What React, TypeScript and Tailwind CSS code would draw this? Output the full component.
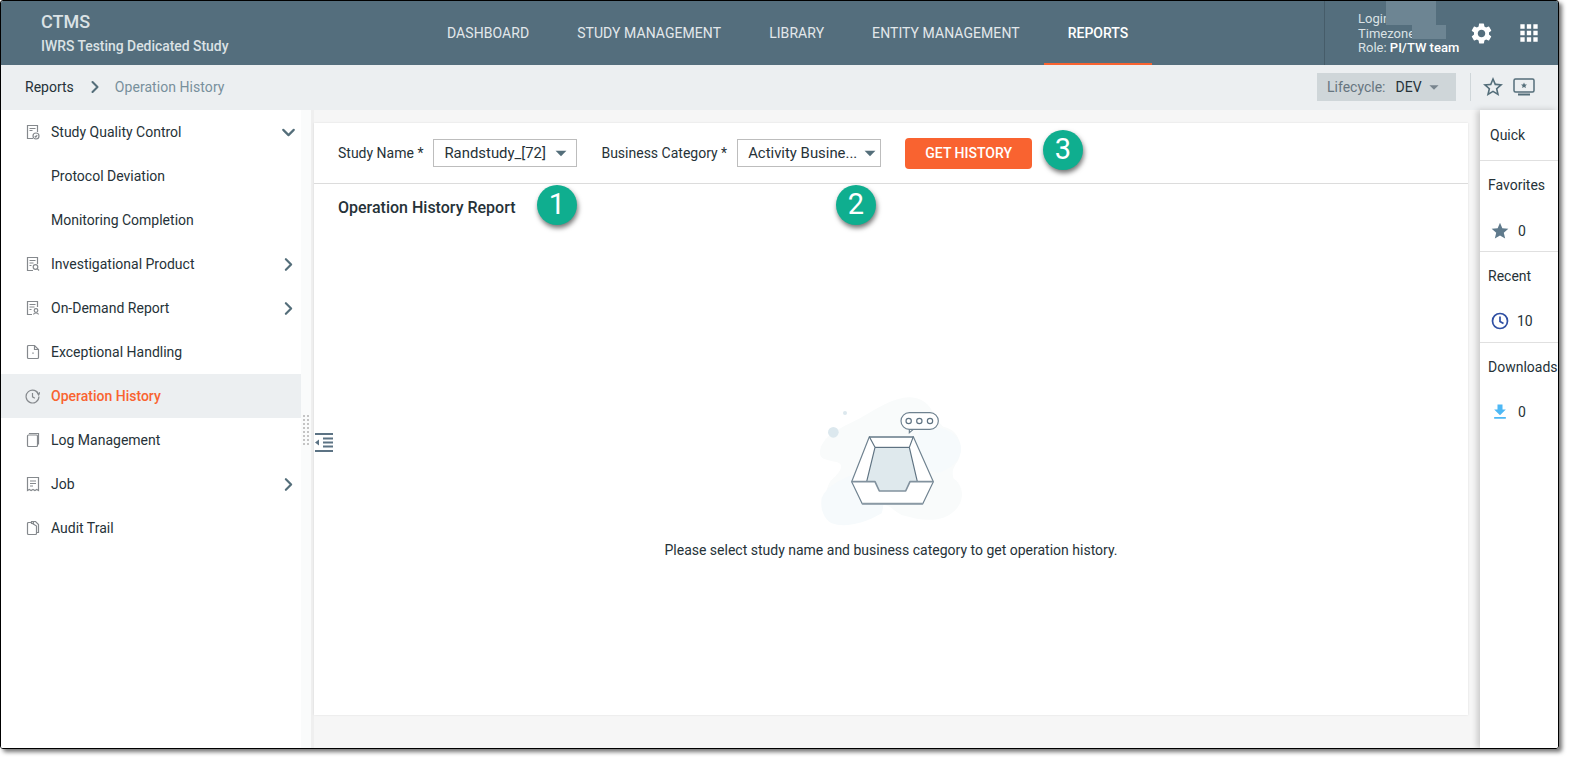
import { ChevronDown, ChevronRight } from "lucide-react";
import { MdApps, MdArrowDropDown, MdFileDownload, MdSettings, MdStar, MdStarBorder } from "react-icons/md";

const navItems = ["DASHBOARD", "STUDY MANAGEMENT", "LIBRARY", "ENTITY MANAGEMENT", "REPORTS"];

const Sheet = ({ children }: { children: React.ReactNode }) => (
  <svg width="14" height="16" viewBox="0 0 14 16" fill="none" stroke="#85898d" strokeWidth="1.2">
    {children}
  </svg>
);

const icons: Record<string, React.ReactNode> = {
  quality: (
    <Sheet>
      <path d="M7 14.500H1.500V1.500h10V8" />
      <path d="M3.500 4.500h6M3.500 6.500h3" />
      <circle cx="10" cy="12" r="3" />
      <path d="M8.800 12l1 1 1.400-1.800" />
    </Sheet>
  ),
  product: (
    <Sheet>
      <path d="M7 14.500H1.500V1.500h10V8" />
      <path d="M3.500 4.500h6M3.500 7h4M3.500 9.500h2" />
      <circle cx="9.500" cy="11" r="2.300" />
      <path d="M11.200 12.700l1.800 1.800" />
    </Sheet>
  ),
  demand: (
    <Sheet>
      <path d="M6 14.500H1.500V1.500h10V7" />
      <path d="M3.500 4.500h6M3.500 7h5M3.500 9.500h2" />
      <circle cx="10" cy="10.500" r="1.800" />
      <path d="M7.500 14.500c.3-2 4.700-2 5 0" />
    </Sheet>
  ),
  exceptional: (
    <Sheet>
      <path d="M8.500 1.500H2.500a1 1 0 0 0-1 1v11a1 1 0 0 0 1 1h9a1 1 0 0 0 1-1v-8z" />
      <path d="M8.500 1.500v4h4" />
      <path d="M7 8.500v1.200" strokeWidth="1.400" />
    </Sheet>
  ),
  history: (
    <svg width="15" height="15" viewBox="0 0 14 14" fill="none" stroke="#85898d" strokeWidth="1.100">
      <path d="M12.800 5.500A6 6 0 1 0 13 7" />
      <path d="M11 2.800l1.800 2.700 1-2.500" />
      <path d="M7 3.800V7.300l2.200 1.400" />
    </svg>
  ),
  log: (
    <Sheet>
      <path d="M3.500 2V1.500h9v10.500h-1" />
      <rect x="1.500" y="3" width="10" height="11.500" rx="1" />
    </Sheet>
  ),
  job: (
    <Sheet>
      <path d="M1.500 1.500h11v13l-1.800-1-1.800 1-1.900-1-1.900 1-1.800-1-1.800 1z" />
      <path d="M4 5h6M4 7.500h6M4 10h3" />
    </Sheet>
  ),
  audit: (
    <Sheet>
      <path d="M5 2.500H2.500a1 1 0 0 0-1 1v10a1 1 0 0 0 1 1h7a1 1 0 0 0 1-1V6z" />
      <path d="M5.500 4V1.500h4l3 3v8h-2" />
      <path d="M7.500 1.500v3" />
    </Sheet>
  ),
};

const menu = [
  { label: "Study Quality Control", icon: "quality", arrow: "down" },
  { label: "Protocol Deviation" },
  { label: "Monitoring Completion" },
  { label: "Investigational Product", icon: "product", arrow: "right" },
  { label: "On-Demand Report", icon: "demand", arrow: "right" },
  { label: "Exceptional Handling", icon: "exceptional" },
  { label: "Operation History", icon: "history", active: true },
  { label: "Log Management", icon: "log" },
  { label: "Job", icon: "job", arrow: "right" },
  { label: "Audit Trail", icon: "audit" },
];

const Callout = ({ n, className }: { n: number; className: string }) => (
  <div
    className={`absolute flex h-10 w-10 items-center justify-center rounded-full bg-[#0fae8f] text-[29px] text-white shadow-[1px_3px_5px_rgba(0,0,0,0.55)] ${className}`}
  >
    {n}
  </div>
);

const Select = ({ value, className }: { value: string; className: string }) => (
  <div className={`flex h-7 w-36 items-center justify-between border border-[#bdbdbd] pl-[10px] text-[14.900px] text-[#263238] ${className}`}>
    <span className="whitespace-nowrap pt-[1px]">{value}</span>
    <MdArrowDropDown className="shrink-0 text-[#546e7a]" size={26} />
  </div>
);

const EmptyTray = () => (
  <svg className="-ml-[2px]" width="180" height="155" viewBox="0 0 540 465" fill="none">
    <path d="M60 205c0-50 60-75 120-105 60-35 120-75 170-60 50 15 50 60 80 85 50 10 60 60 45 100-15 25-20 30-15 55 40 30 30 80-5 105-40 30-100 20-150 5-30-15-40-40-70-25-50 30-100 45-135 15-30-30-25-80 0-100 25-25 35-45 5-50-30-5-45-10-45-25z" fill="#f9fbfb" />
    <path d="M360 130c50-15 110 5 122 50 8 40-25 70-70 85l-80-30z" fill="#f6fafc" />
    <path d="M65 340c15-45 90-75 150-85 40 30 40 100 30 130-50 30-110 45-150 30-25-15-35-45-30-75z" fill="#f6fafc" />
    <circle cx="100" cy="142" r="16" fill="#dce8ee" />
    <circle cx="135" cy="84" r="6" fill="#dce8ee" />
    <path d="M208 155h132l60 135-32 67H187l-32-67z" fill="#fff" />
    <path d="M225 187h103l24 103h-22l-13 28h-79l-13-28h-25z" fill="#dfe9ed" />
    <path d="M208 155h132l60 135-32 67H187l-32-67z" stroke="#6f8290" strokeWidth="3.500" strokeLinejoin="round" />
    <path d="M208 156h132" stroke="#8b9aa5" strokeWidth="6" />
    <path d="M187 356h181" stroke="#8b9aa5" strokeWidth="5" />
    <path d="M225 187h103" stroke="#41586a" strokeWidth="3" />
    <path d="M225 187l-25 103M328 187l24 103M208 155l17 32M340 155l-12 32" stroke="#5f7382" strokeWidth="3.500" />
    <path d="M155 290h70l13 28h79l13-28h70" stroke="#82929e" strokeWidth="5" strokeLinejoin="round" />
    <path d="M328 133h62a25 25 0 0 0 0-50h-62a25 25 0 0 0 0 50v10l12-10" fill="#fff" stroke="#6f8290" strokeWidth="3.500" />
    <circle cx="326" cy="108" r="8" stroke="#5f7382" strokeWidth="3.500" />
    <circle cx="358" cy="108" r="8" stroke="#5f7382" strokeWidth="3.500" />
    <circle cx="390" cy="108" r="8" stroke="#5f7382" strokeWidth="3.500" />
  </svg>
);

const App = () => {
  return (
    <div className="h-[761px] w-[1570px] bg-white font-['Roboto',sans-serif]">
      <div className="relative flex h-[749px] w-[1559px] flex-col overflow-hidden rounded-[3px] border border-black shadow-[3px_3px_4px_rgba(0,0,0,0.55)]">
        <header className="flex h-16 shrink-0 items-stretch bg-[#546e7d]">
          <div className="w-[422px] pl-10 pt-[11px]">
            <p className="text-lg font-medium leading-5 text-[#dbe2e5]">CTMS</p>
            <p className="mt-[4px] text-[13.900px] font-medium leading-5 text-[#dbe2e5]">IWRS Testing Dedicated Study</p>
          </div>
          <nav className="flex">
            {navItems.map((item) => (
              <div
                key={item}
                className={`flex items-center px-6 text-sm ${
                  item === "REPORTS" ? "border-b-2 border-[#f96330] pt-[2px] font-medium text-white" : "pb-[1px] tracking-[0.06px] text-[#e3e8eb]"
                }`}
              >
                {item}
              </div>
            ))}
          </nav>
          <div className="relative ml-auto flex w-[234px] items-center border-l border-[#465c69] pl-[33px] pt-[2px]">
            <div className="text-[13px] leading-[14.500px] text-[#dbe2e5]">
              <p>Login:</p>
              <p>Timezone:</p>
              <p>
                Role: <span className="font-medium text-white">PI/TW team</span>
              </p>
            </div>
            <MdSettings className="absolute left-[144px] top-[20px] text-white" size={25} />
            <MdApps className="absolute left-[191px] top-[19px] text-white" size={26} />
            <div className="absolute left-[61px] top-0 h-[24px] w-[50px] bg-[#6d8593]" />
            <div className="absolute left-[87px] top-[24px] h-[14px] w-[34px] bg-[#6d8593]" />
          </div>
        </header>

        <div className="flex h-[45px] shrink-0 items-center bg-[#eceff1] pb-[1px] pl-6 pr-[23px] text-sm">
          <span className="text-[#263238]">Reports</span>
          <ChevronRight className="ml-[11px] text-[#546e7a]" size={20} strokeWidth={2.500} />
          <span className="ml-[10px] tracking-[0.06px] text-[#78909c]">Operation History</span>
          <div className="ml-auto flex h-7 w-[139px] items-center bg-[#cfd6d9] pl-[10px]">
            <span className="text-[#66757f]">Lifecycle:</span>
            <span className="ml-[10px] text-[#263238]">DEV</span>
            <MdArrowDropDown className="ml-[1px] text-[#78858e]" size={22} />
          </div>
          <div className="ml-[14px] h-7 w-px bg-[#cfd6d9]" />
          <MdStarBorder className="ml-[10px] text-[#546e7a]" size={24} />
          <svg className="ml-[8px]" width="22" height="20" viewBox="0 0 22 20" fill="none">
            <rect x="1" y="2" width="20" height="13" rx="1.500" stroke="#546e7a" strokeWidth="1.500" />
            <path d="M5 17.500h12" stroke="#546e7a" strokeWidth="2" />
            <path d="M11 5.500l.9 1.900 2.100.2-1.600 1.400.5 2.100-1.900-1.100-1.900 1.100.5-2.100L8 7.600l2.100-.2z" fill="#546e7a" />
          </svg>
        </div>

        <div className="flex min-h-0 flex-1">
          <aside className="w-[313px] shrink-0 border-r-[3px] border-[#efefef] bg-[#fafbfb]">
            <div className="h-full w-[300px] bg-white">
              {menu.map((m) => (
                <div
                  key={m.label}
                  className={`flex h-11 items-center text-sm ${
                    m.active ? "bg-[#eceff1] font-medium text-[#f96330]" : "text-[#263238]"
                  }`}
                >
                  <span className="flex w-[50px] justify-end pr-[11px]">{m.icon && icons[m.icon]}</span>
                  <span>{m.label}</span>
                  {m.arrow === "down" && <ChevronDown className="ml-auto mr-[2px] text-[#546e7a]" size={21} strokeWidth={2.500} />}
                  {m.arrow === "right" && <ChevronRight className="ml-auto mr-[2px] text-[#546e7a]" size={21} strokeWidth={2.500} />}
                </div>
              ))}
            </div>
          </aside>

          <main className="min-w-0 flex-1 bg-[#f6f6f6] pr-3 pt-[13px]">
            <div className="flex h-[592px] flex-col bg-white shadow-[0_0_2px_rgba(0,0,0,0.1)]">
              <div className="flex h-[61px] shrink-0 items-center border-b border-[#dcdcdc] pl-6 text-sm text-[#263238]">
                <span className="mr-[10px]">Study Name *</span>
                <Select value="Randstudy_[72]" className="pr-[2px]" />
                <span className="ml-6 mr-[10px]">Business Category *</span>
                <Select value="Activity Busine..." className="pr-0" />
                <button className="ml-6 h-[31px] w-[127px] rounded-sm bg-[#f96330] text-sm font-medium text-white">
                  GET HISTORY
                </button>
              </div>
              <p className="pl-6 pt-[14px] text-base font-medium leading-5 text-[#263238]">Operation History Report</p>
              <div className="flex flex-col items-center pt-[167px]">
                <EmptyTray />
                <p className="text-sm text-[#263238]">Please select study name and business category to get operation history.</p>
              </div>
            </div>
          </main>

          <aside className="w-[78px] shrink-0 overflow-hidden bg-white text-sm text-[#263238] shadow-[-3px_0_6px_rgba(0,0,0,0.18)]">
            <div className="flex h-[51px] items-center border-b border-[#e0e0e0] pl-[10px]">Quick</div>
            <div className="h-[91px] border-b border-[#e0e0e0] pl-2 pt-[14px]">
              <p className="leading-5">Favorites</p>
              <div className="mt-[26px] flex items-center gap-2 pl-[2px]">
                <MdStar className="text-[#5f7a8c]" size={20} />
                <span>0</span>
              </div>
            </div>
            <div className="h-[91px] border-b border-[#e0e0e0] pl-2 pt-[14px]">
              <p className="leading-5">Recent</p>
              <div className="mt-[25px] flex items-center gap-2 pl-[3px]">
                <svg width="18" height="18" viewBox="0 0 18 18" fill="none" stroke="#2f4fa3" strokeWidth="1.700">
                  <circle cx="9" cy="9" r="7.500" />
                  <path d="M9 4.500V9.500L12.500 11.500" />
                </svg>
                <span>10</span>
              </div>
            </div>
            <div className="pl-2 pt-[14px]">
              <p className="whitespace-nowrap leading-5">Downloads</p>
              <div className="mt-[25px] flex items-center gap-2 pl-[2px]">
                <MdFileDownload className="text-[#4db8f5]" size={20} />
                <span>0</span>
              </div>
            </div>
          </aside>
        </div>

        <div className="absolute left-[302px] top-[414px] grid grid-cols-2 gap-x-[2px] gap-y-[2px]">
          {Array.from({ length: 16 }).map((_, i) => (
            <span key={i} className="h-[2px] w-[2px] bg-[#c4c4c4]" />
          ))}
        </div>
        <svg className="absolute left-[314px] top-[432px]" width="18" height="19" viewBox="0 0 18 19">
          <path d="M0 1h18M8 5.500h10M8 9.500h10M8 13.500h10M0 18h18" stroke="#5c7384" strokeWidth="2" />
          <path d="M4 6.500v6L0 9.500z" fill="#5c7384" />
        </svg>

        <Callout n={1} className="left-[536px] top-[184px]" />
        <Callout n={2} className="left-[835px] top-[184px]" />
        <Callout n={3} className="left-[1042px] top-[129px]" />
      </div>
    </div>
  );
};

export default App;
